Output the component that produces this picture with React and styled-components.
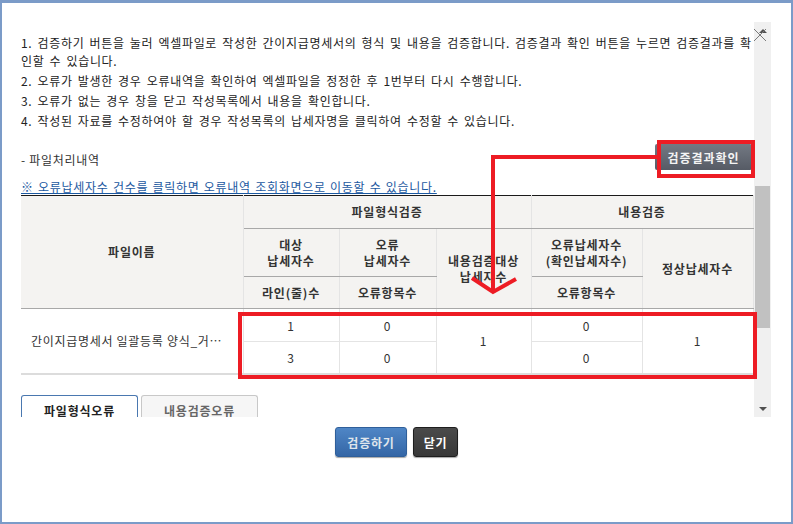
import React from "react";
import styled, { createGlobalStyle } from "styled-components";

const GlobalStyle = createGlobalStyle`
  html, body {
    margin: 0;
    padding: 0;
    background: #ffffff;
  }
  body {
    font-family: "Noto Sans CJK KR", "Noto Sans", sans-serif;
    font-size: 12px;
    letter-spacing: 0.7px;
    color: #333;
  }
  * {
    box-sizing: border-box;
  }
`;

const Window = styled.div`
  position: relative;
  width: 793px;
  height: 524px;
  border: 2px solid #7b9bc8;
  border-top-width: 3px;
  background: #ffffff;
  display: flex;
  flex-direction: column;
  overflow: hidden;
`;

const ScrollArea = styled.div`
  display: flex;
  height: 395px;
  margin: 19px 20px 0 0;
`;

const Content = styled.div`
  flex: 1;
  min-width: 0;
  overflow: hidden;
  padding: 12px 1px 0 19px;
`;

const Guide = styled.p`
  margin: 0 0 2px;
  line-height: 18px;
  font-size: 12px;
  color: #222;
  word-spacing: 1.7px;
`;

const SectionRow = styled.div`
  display: flex;
  justify-content: space-between;
  align-items: center;
  margin-top: 14px;
`;

const SectionTitle = styled.span`
  font-size: 12px;
  color: #333;
  padding-top: 5px;
`;

const DarkButton = styled.button`
  font-family: "Noto Sans CJK KR", sans-serif;
  width: 97px;
  height: 26px;
  margin-right: 1px;
  border: none;
  border-radius: 2px;
  background: linear-gradient(#737983, #565b65);
  color: #f4f4f4;
  font-size: 12px;
  font-weight: bold;
  letter-spacing: 1px;
  cursor: pointer;
`;

const Notice = styled.a`
  display: block;
  margin-top: 8px;
  line-height: 17px;
  color: #1b58a0;
  font-size: 12px;
  word-spacing: 1px;
  text-decoration: underline;
  cursor: pointer;
`;

const ResultTable = styled.table`
  width: 732px;
  table-layout: fixed;
  border-collapse: collapse;
  border-top: 1px solid #1a1a1a;
  border-bottom: 2px solid #dcdcdc;
`;

const Col = styled.col`
  width: ${(p) => p.$w}px;
`;

const Row = styled.tr`
  height: ${(p) => p.$h}px;
`;

const Th = styled.th`
  background: #f4f3f1;
  color: #333;
  font-size: 12px;
  font-weight: bold;
  letter-spacing: 0.8px;
  line-height: 16px;
  text-align: center;
  padding: 0;
  border-right: 1px solid #e4e4e4;
  border-bottom: 1px solid #a8a8a8;
`;

const Td = styled.td`
  font-size: 12px;
  color: #333;
  text-align: ${(p) => (p.$left ? "left" : "center")};
  padding: 0 ${(p) => (p.$left ? "10px" : "0")};
  border-right: 1px solid #e4e4e4;
  border-bottom: 1px solid #e4e4e4;
  white-space: nowrap;
  overflow: hidden;
`;

const Tabs = styled.div`
  display: flex;
  gap: 3px;
  margin-top: 20px;
`;

const Tab = styled.div`
  width: 117px;
  height: 30px;
  line-height: 30px;
  text-align: center;
  font-size: 12px;
  font-weight: bold;
  letter-spacing: 0.8px;
  border: 1px solid ${(p) => (p.$active ? "#4a78b0" : "#c8c8c8")};
  border-bottom: none;
  border-radius: 3px 3px 0 0;
  background: ${(p) => (p.$active ? "#ffffff" : "#f6f6f6")};
  color: ${(p) => (p.$active ? "#222" : "#666")};
`;

const ScrollBar = styled.div`
  width: 17px;
  background: #f0f0f0;
  display: flex;
  flex-direction: column;
`;

const ArrowBox = styled.div`
  height: 17px;
  display: flex;
  align-items: center;
  justify-content: center;
`;

const Triangle = styled.span`
  width: 0;
  height: 0;
  border-left: 4px solid transparent;
  border-right: 4px solid transparent;
  ${(p) =>
    p.$up ? "border-bottom: 4px solid #505050;" : "border-top: 4px solid #505050;"}
`;

const Track = styled.div`
  flex: 1;
`;

const Thumb = styled.div`
  margin: 147px 1px 0;
  height: 142px;
  background: #c1c1c1;
`;

const ButtonRow = styled.div`
  display: flex;
  justify-content: center;
  gap: 6px;
  margin-top: 10px;
`;

const ActionButton = styled.button`
  font-family: "Noto Sans CJK KR", sans-serif;
  height: 30px;
  width: ${(p) => (p.$primary ? "72px" : "45px")};
  padding: 0;
  border-radius: 3px;
  border: 1px solid ${(p) => (p.$primary ? "#2f5f9a" : "#1e1e1e")};
  background: ${(p) =>
    p.$primary
      ? "linear-gradient(#4f86c6, #3466a6)"
      : "linear-gradient(#4a4a4a, #383838)"};
  color: ${(p) => (p.$primary ? "#dfe5ec" : "#ffffff")};
  font-size: 12px;
  font-weight: bold;
  letter-spacing: 0.8px;
  box-shadow: 0 1px 1px rgba(0, 0, 0, 0.35);
  cursor: pointer;
`;

const CloseIcon = styled.svg`
  position: absolute;
  top: 25px;
  left: 751px;
`;

const Annotation = styled.svg`
  position: absolute;
  top: -3px;
  left: -2px;
  pointer-events: none;
`;

const guides = [
  "1. 검증하기 버튼을 눌러 엑셀파일로 작성한 간이지급명세서의 형식 및 내용을 검증합니다. 검증결과 확인 버튼을 누르면 검증결과를 확인할 수 있습니다.",
  "2. 오류가 발생한 경우 오류내역을 확인하여 엑셀파일을 정정한 후 1번부터 다시 수행합니다.",
  "3. 오류가 없는 경우 창을 닫고 작성목록에서 내용을 확인합니다.",
  "4. 작성된 자료를 수정하여야 할 경우 작성목록의 납세자명을 클릭하여 수정할 수 있습니다.",
];

const App = () => {
  return (
    <>
      <GlobalStyle />
      <Window>
        <ScrollArea>
          <Content>
            {guides.map((g) => (
              <Guide key={g}>{g}</Guide>
            ))}

            <SectionRow>
              <SectionTitle>- 파일처리내역</SectionTitle>
              <DarkButton type="button">검증결과확인</DarkButton>
            </SectionRow>

            <Notice>※ 오류납세자수 건수를 클릭하면 오류내역 조회화면으로 이동할 수 있습니다.</Notice>

            <ResultTable>
              <colgroup>
                <Col $w={222} />
                <Col $w={96} />
                <Col $w={97} />
                <Col $w={95} />
                <Col $w={111} />
                <Col $w={111} />
              </colgroup>
              <thead>
                <Row $h={33}>
                  <Th rowSpan={3}>파일이름</Th>
                  <Th colSpan={3}>파일형식검증</Th>
                  <Th colSpan={2}>내용검증</Th>
                </Row>
                <Row $h={48}>
                  <Th>
                    대상
                    <br />
                    납세자수
                  </Th>
                  <Th>
                    오류
                    <br />
                    납세자수
                  </Th>
                  <Th rowSpan={2}>
                    내용검증대상
                    <br />
                    납세자수
                  </Th>
                  <Th>
                    오류납세자수
                    <br />
                    (확인납세자수)
                  </Th>
                  <Th rowSpan={2}>정상납세자수</Th>
                </Row>
                <Row $h={32}>
                  <Th>라인(줄)수</Th>
                  <Th>오류항목수</Th>
                  <Th>오류항목수</Th>
                </Row>
              </thead>
              <tbody>
                <Row $h={33}>
                  <Td rowSpan={2} $left>
                    간이지급명세서 일괄등록 양식_거…
                  </Td>
                  <Td>1</Td>
                  <Td>0</Td>
                  <Td rowSpan={2}>1</Td>
                  <Td>0</Td>
                  <Td rowSpan={2}>1</Td>
                </Row>
                <Row $h={32}>
                  <Td>3</Td>
                  <Td>0</Td>
                  <Td>0</Td>
                </Row>
              </tbody>
            </ResultTable>

            <Tabs>
              <Tab $active>파일형식오류</Tab>
              <Tab>내용검증오류</Tab>
            </Tabs>
          </Content>

          <ScrollBar>
            <ArrowBox>
              <Triangle $up />
            </ArrowBox>
            <Track>
              <Thumb />
            </Track>
            <ArrowBox>
              <Triangle />
            </ArrowBox>
          </ScrollBar>
        </ScrollArea>

        <ButtonRow>
          <ActionButton type="button" $primary>
            검증하기
          </ActionButton>
          <ActionButton type="button">닫기</ActionButton>
        </ButtonRow>

        <CloseIcon width="14" height="14" viewBox="0 0 14 14">
          <path d="M1 1 L13 13 M13 1 L1 13" stroke="#7a7a7a" strokeWidth="1" />
        </CloseIcon>

        {/* 붉은색 안내 표시 */}
        <Annotation width="793" height="524" viewBox="0 0 793 524">
          <g fill="none" stroke="#ed1c24" strokeWidth="4">
            <rect x="659" y="142" width="94" height="34" />
            <rect x="240" y="314" width="515" height="63" />
            <polyline points="657,157 493,157 493,291" />
            <polyline points="472,278 493,292 516,279" strokeLinejoin="miter" />
          </g>
        </Annotation>
      </Window>
    </>
  );
};

export default App;
